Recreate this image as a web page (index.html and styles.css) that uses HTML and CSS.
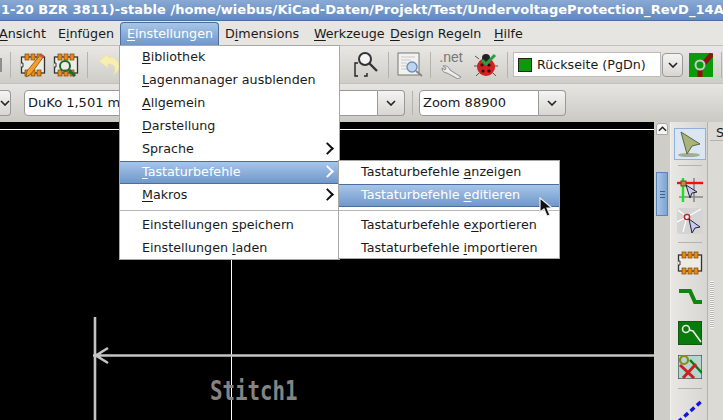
FILE: index.html
```html
<!DOCTYPE html>
<html lang="de">
<head>
<meta charset="UTF-8">
<title>KiCad Pcbnew</title>
<link rel="stylesheet" href="styles.css">
</head>
<body>
<svg class="defs" width="0" height="0">
  <symbol id="footprint" viewBox="0 0 26 26">
    <rect x="1.5" y="5" width="23" height="16" fill="#ecece6" stroke="#333" stroke-width="1.3"/>
    <path d="M1 11h2v4H1" fill="#ecece6" stroke="#333"/>
    <g fill="#ea8a12" stroke="#7a4400" stroke-width=".7">
      <rect x="5" y="2" width="4" height="6"/><rect x="11" y="2" width="4" height="6"/><rect x="17" y="2" width="4" height="6"/>
      <rect x="5" y="18" width="4" height="6"/><rect x="11" y="18" width="4" height="6"/><rect x="17" y="18" width="4" height="6"/>
    </g>
  </symbol>
  <symbol id="arrowdown" viewBox="0 0 10 6">
    <path d="M1 1l4 4 4-4" fill="none" stroke="#222" stroke-width="1.6"/>
  </symbol>
</svg>

<div class="window">
  <div class="titlebar">1-20 BZR 3811)-stable /home/wiebus/KiCad-Daten/Projekt/Test/UndervoltageProtection_RevD_14A</div>

  <div class="menubar">
    <span class="menu-ansicht"><u>A</u>nsicht</span>
    <span class="menu-einfuegen">E<u>i</u>nfügen</span>
    <span class="menu-open"><u>E</u>instellungen</span>
    <span class="menu-dim">D<u>i</u>mensions</span>
    <span class="menu-werk"><u>W</u>erkzeuge</span>
    <span class="menu-design"><u>D</u>esign Regeln</span>
    <span class="menu-hilfe"><u>H</u>ilfe</span>
  </div>

  <div class="toolbar toolbar-top">
    <div class="stub"></div>
    <div class="sep sep-a"></div>
    <svg class="icon icon-edit" width="26" height="26" viewBox="0 0 26 26">
      <use href="#footprint"/>
      <path d="M21 2l3 2-13 18-5 3 1-6z" fill="#f0a030" stroke="#8a5200" stroke-width=".8"/>
      <path d="M21 2l3 2-1.5 2-3-2z" fill="#d84a4a"/>
    </svg>
    <svg class="icon icon-find" width="26" height="26" viewBox="0 0 26 26">
      <use href="#footprint"/>
      <circle cx="12" cy="14" r="5" fill="none" stroke="#1d6a2c" stroke-width="2"/>
      <path d="M16 18l6 6" stroke="#1d6a2c" stroke-width="3"/>
    </svg>
    <div class="sep sep-b"></div>
    <svg class="icon icon-undo" width="22" height="24" viewBox="0 0 22 24">
      <path d="M10 1L1 8l9 7v-4c5 0 7 2 7 6 0 2-1 4-2 5 4-2 6-5 6-9 0-6-5-9-11-9z" fill="#f7eeb0" stroke="#eadf9a" stroke-width=".6"/>
    </svg>
    <div class="hidden-gap"></div>
    <svg class="icon icon-zoomsel" width="26" height="26" viewBox="0 0 26 26">
      <path d="M5 11H2v13h3M11 24h3v-3" fill="none" stroke="#222" stroke-width="1.4"/>
      <circle cx="12" cy="7" r="6" fill="#f4f4f4" stroke="#333" stroke-width="2"/>
      <path d="M16 11l8 8" stroke="#333" stroke-width="2.4"/>
    </svg>
    <div class="sep sep-c"></div>
    <svg class="icon icon-doc" width="26" height="26" viewBox="0 0 26 26">
      <rect x="1" y="1" width="21" height="22" fill="#f2f2f0" stroke="#777"/>
      <path d="M4 5h14M4 8h10M4 11h6M4 14h5M4 17h6" stroke="#c9c9c9"/>
      <circle cx="15" cy="15" r="5" fill="#bcd6f2" stroke="#6f8fb4" stroke-width="1.4"/>
      <path d="M19 19l6 5" stroke="#888" stroke-width="2"/>
    </svg>
    <div class="sep sep-d"></div>
    <div class="net-icon">
      <span class="net-label">.net</span>
      <svg width="24" height="15" viewBox="0 0 24 15">
        <path d="M4 2l3 2-1 2-3-2c0 3 2 5 5 5l11 6 3-2L11 6C10 3 7 1 4 2z" fill="#ececec" stroke="#8c8c8c" stroke-width="1"/>
      </svg>
    </div>
    <svg class="icon icon-bug" width="25" height="24" viewBox="0 0 25 24">
      <path d="M5 6L1 3M4 13H0M5 20l-3 3M19 20l3 3M20 13h4" stroke="#555" stroke-width="1"/>
      <ellipse cx="12" cy="14" rx="9" ry="9" fill="#d32020"/>
      <circle cx="12" cy="5" r="4" fill="#222"/>
      <circle cx="8" cy="12" r="1.6" fill="#300"/><circle cx="15" cy="12" r="1.6" fill="#300"/>
      <circle cx="9" cy="18" r="1.6" fill="#300"/><circle cx="15" cy="18" r="1.6" fill="#300"/>
      <path d="M8 7l4 4 9-9" fill="none" stroke="#25a045" stroke-width="3"/>
    </svg>
    <div class="sep sep-e"></div>
    <div class="layer-box"><span class="layer-swatch"></span>Rückseite (PgDn)</div>
    <div class="layer-btn"><svg width="10" height="6"><use href="#arrowdown"/></svg></div>
    <svg class="icon icon-via" width="24" height="24" viewBox="0 0 24 24">
      <rect width="24" height="24" fill="#0a9a0a"/>
      <path d="M11 24V15L23 1" fill="none" stroke="#8a1414" stroke-width="5"/>
      <circle cx="11" cy="12" r="4.5" fill="#0a9a0a" stroke="#c9c9c9" stroke-width="2"/>
    </svg>
    <div class="sep sep-f"></div>
  </div>

  <div class="toolbar toolbar-bottom">
    <div class="small-btn"><svg width="10" height="6"><use href="#arrowdown"/></svg></div>
    <div class="field field-duko">DuKo 1,501 mm</div>
    <div class="field-btn"><svg width="10" height="6"><use href="#arrowdown"/></svg></div>
    <div class="sep sep-g"></div>
    <div class="field field-zoom">Zoom 88900</div>
    <div class="field-btn"><svg width="10" height="6"><use href="#arrowdown"/></svg></div>
  </div>

  <div class="main">
    <div class="canvas">
      <div class="cross-h"></div>
      <div class="cross-v"></div>
      <svg class="dimension" width="561" height="103" viewBox="0 0 561 103">
        <path d="M2 0V103M0 38.5H561M15 31L3 38.5l12 7.5" fill="none" stroke="#c4c4c4" stroke-width="2.6"/>
      </svg>
      <div class="stitch">Stitch1</div>
    </div>

    <div class="scrollbar">
      <div class="scroll-up"><svg width="9" height="6" viewBox="0 0 10 6"><path d="M1 5l4-4 4 4" fill="none" stroke="#222" stroke-width="1.6"/></svg></div>
      <div class="scroll-thumb"><i></i><i></i><i></i></div>
    </div>

    <div class="vtools">
      <div class="tool-active">
        <svg width="24" height="26" viewBox="0 0 24 26">
          <ellipse cx="11" cy="24" rx="11" ry="2" fill="#8c9468" opacity=".7"/>
          <path d="M3 1l19 12-8 2-5 8z" fill="#a9b37c" stroke="#5c6640" stroke-width="1"/>
        </svg>
      </div>
      <div class="vsep"></div>
      <svg class="vicon v-grid" width="26" height="24" viewBox="0 0 26 24">
        <path d="M17 0v24M2 19h24" stroke="#888" stroke-width="1.6"/>
        <path d="M6 0v24" stroke="#22dd22" stroke-width="2.4"/>
        <path d="M0 5h26" stroke="#f01010" stroke-width="2.4"/>
        <rect x="4" y="3" width="5" height="5" fill="#c88a3a" stroke="#553"/>
        <path d="M9 7l11 7-5 1-2 5z" fill="#c8c8f4" stroke="#223" stroke-width="1"/>
      </svg>
      <svg class="vicon v-rats" width="26" height="26" viewBox="0 0 26 26">
        <rect width="26" height="26" rx="3" fill="#d4d4d4"/>
        <path d="M10 9L1 2M10 9L24 1M10 9L0 14M10 9L6 24" stroke="#fff" stroke-width="1.2"/>
        <circle cx="10" cy="9" r="2.6" fill="none" stroke="#d01818" stroke-width="1.4"/>
        <path d="M12 11l11 8-5 1-3 5z" fill="#c8c8f4" stroke="#223" stroke-width="1"/>
      </svg>
      <div class="vsep vsep-2"></div>
      <svg class="vicon v-foot" width="26" height="26"><use href="#footprint"/></svg>
      <svg class="vicon v-track" width="24" height="16" viewBox="0 0 24 16">
        <path d="M1 2h11l5 11h7" fill="none" stroke="#0a880a" stroke-width="4"/>
      </svg>
      <svg class="vicon v-via2" width="24" height="24" viewBox="0 0 24 24">
        <rect width="24" height="24" fill="#0a7a0a" stroke="#1b3a1b"/>
        <circle cx="8" cy="8" r="3.5" fill="none" stroke="#e8e8e8" stroke-width="1.6"/>
        <path d="M11 9l4 1 8 11" fill="none" stroke="#e8e8e8" stroke-width="1.6"/>
      </svg>
      <svg class="vicon v-keep" width="24" height="24" viewBox="0 0 24 24">
        <rect width="24" height="24" fill="#b4d6d2" stroke="#1b2a1b"/>
        <path d="M12 5l12 13" stroke="#0a7a0a" stroke-width="2.4"/>
        <circle cx="6" cy="5" r="4" fill="none" stroke="#8a8a14" stroke-width="2.2"/>
        <path d="M2 10l14 13M18 9L5 23" stroke="#cc2020" stroke-width="3"/>
      </svg>
      <div class="vsep vsep-3"></div>
      <svg class="vicon v-dash" width="26" height="24" viewBox="0 0 26 24">
        <path d="M1 23L26 1" stroke="#1414e0" stroke-width="3.4" stroke-dasharray="5 3.4"/>
      </svg>
    </div>

    <div class="sidepanel">
      <div class="side-head">S</div>
      <div class="side-grip"></div>
    </div>
  </div>

  <!-- open menus -->
  <div class="popup popup-main">
    <div class="item"><u>B</u>ibliothek</div>
    <div class="item"><u>L</u>agenmanager ausblenden</div>
    <div class="item"><u>A</u>llgemein</div>
    <div class="item"><u>D</u>arstellung</div>
    <div class="item">Sprache<b class="more"></b></div>
    <div class="item active"><u>T</u>astaturbefehle<b class="more"></b></div>
    <div class="item"><u>M</u>akros<b class="more"></b></div>
    <div class="popup-sep"></div>
    <div class="item">Einstellungen <u>s</u>peichern</div>
    <div class="item">Einstellungen <u>l</u>aden</div>
  </div>
  <div class="popup popup-sub">
    <div class="item">Tastaturbefehle <u>a</u>nzeigen</div>
    <div class="item active">Tastaturbefehle <u>e</u>ditieren</div>
    <div class="popup-sep"></div>
    <div class="item">Tastaturbefehle e<u>x</u>portieren</div>
    <div class="item">Tastaturbefehle <u>i</u>mportieren</div>
  </div>

  <svg class="cursor" width="16" height="21" viewBox="0 0 16 21">
    <path d="M1 1v14l4-3 3 7 3-1-3-7h5z" fill="#111" stroke="#eee" stroke-width="1.2"/>
  </svg>
</div>
</body>
</html>
```

FILE: styles.css
```css
html, body { margin:0; padding:0; background:#000; }
.defs { position:absolute; }
.window { width:723px; height:420px; overflow:hidden; position:relative; display:flex; flex-direction:column; font-family:"DejaVu Sans",sans-serif; font-size:12.7px; color:#1a1a1a; background:#dcdad5; }
u { text-decoration-thickness:1px; text-underline-offset:2px; }

.titlebar { height:21px; flex:none; line-height:20px; padding-left:1px; box-sizing:border-box; background:linear-gradient(#8aa9d4,#6089c0); color:#fff; font-weight:bold; font-size:13px; white-space:nowrap; overflow:hidden; letter-spacing:.05px; border-bottom:1px solid #4a6f9f; }

.menubar { height:24px; flex:none; display:flex; align-items:center; background:#e6e5e1; box-sizing:border-box; white-space:nowrap; }
.menu-ansicht { margin-left:-1px; width:46px; }
.menu-einfuegen { margin-left:13px; width:56px; }
.menu-open { margin-left:6px; height:23px; margin-top:1px; line-height:22px; padding:0 6px; box-sizing:border-box; width:99px; border:1px solid #4a6f9f; border-bottom:0; border-radius:4px 4px 0 0; background:linear-gradient(#a7c5e9,#6f98ca); color:#fff; }
.menu-dim { margin-left:6px; width:75px; }
.menu-werk { margin-left:14px; width:62px; }
.menu-design { margin-left:14px; width:90px; }
.menu-hilfe { margin-left:14px; }

.toolbar { flex:none; display:flex; align-items:center; border-top:1px solid #c2c0ba; box-sizing:border-box; background:linear-gradient(#e8e7e3,#cfcdc8); }
.toolbar-top { height:38px; }
.toolbar-bottom { height:39px; background:linear-gradient(#e6e5e1,#cbc9c4); }
.sep { width:1px; height:26px; background:#b5b3ad; flex:none; }
.icon { flex:none; }

.stub { width:2px; height:14px; background:#8e8e8a; }
.sep-a { margin-left:8px; }
.icon-edit { margin-left:9px; }
.icon-find { margin-left:7px; }
.sep-b { margin-left:8px; }
.icon-undo { margin-left:10px; }
.hidden-gap { width:233px; flex:none; }
.sep-c { margin-left:9px; }
.icon-doc { margin-left:8px; }
.sep-d { margin-left:7px; }
.net-icon { width:24px; margin-left:8px; display:flex; flex-direction:column; align-items:center; flex:none; }
.net-label { font-size:14px; line-height:13px; color:#777; font-family:"Liberation Sans",sans-serif; }
.icon-bug { margin-left:11px; }
.sep-e { margin-left:8px; }
.layer-box { margin-left:5px; width:148px; height:25px; box-sizing:border-box; display:flex; align-items:center; background:#fff; border:1px solid #bbb; padding-left:4px; flex:none; }
.layer-swatch { width:14px; height:14px; box-sizing:border-box; background:#0a9a0a; border:1px solid #222; margin-right:5px; }
.layer-btn { margin-left:1px; width:21px; height:24px; box-sizing:border-box; border:1px solid #999; border-radius:4px; background:linear-gradient(#f4f4f2,#d8d6d2); display:flex; align-items:center; justify-content:center; flex:none; }
.icon-via { margin-left:6px; }
.sep-f { margin-left:8px; }

.small-btn { width:11px; height:26px; box-sizing:border-box; border:1px solid #999; border-left:0; border-radius:0 4px 4px 0; background:linear-gradient(#f4f4f2,#d8d6d2); display:flex; align-items:center; justify-content:flex-end; overflow:hidden; flex:none; }
.field { height:26px; line-height:24px; box-sizing:border-box; background:#fff; border:1px solid #999; border-radius:4px 0 0 4px; padding-left:3px; white-space:nowrap; overflow:hidden; flex:none; font-size:13px; }
.field-duko { margin-left:13px; width:354px; }
.field-zoom { margin-left:6px; width:120px; }
.field-btn { width:27px; height:26px; box-sizing:border-box; border:1px solid #999; border-left:0; border-radius:0 4px 4px 0; background:linear-gradient(#f4f4f2,#d8d6d2); display:flex; align-items:center; justify-content:center; flex:none; }
.sep-g { margin-left:7px; height:24px; }

.main { flex:1; display:flex; min-height:0; }
.canvas { width:654px; flex:none; background:#000; position:relative; overflow:hidden; }
.cross-h { position:absolute; left:0; right:0; top:7px; height:1px; background:#fff; }
.cross-v { position:absolute; left:231px; top:0; bottom:0; width:1px; background:#fff; }
.dimension { position:absolute; left:93px; top:195px; }
.stitch { position:absolute; left:210px; top:253px; font-family:"DejaVu Sans Mono",monospace; font-weight:bold; font-size:27px; line-height:32px; color:#848484; transform:scaleX(.77); transform-origin:left; }

.scrollbar { width:17px; flex:none; box-sizing:border-box; background:#cfcdc8; padding:1px 2px 0; border-right:1px solid #f0efec; }
.scroll-up { height:12px; border:1px solid #aaa; background:#f4f4f2; border-radius:3px 3px 0 0; display:flex; align-items:center; justify-content:center; box-sizing:border-box; }
.scroll-thumb { margin-top:37px; height:44px; box-sizing:border-box; background:linear-gradient(90deg,#a7c5e9,#7ea4d2); border:1px solid #5e83b2; display:flex; flex-direction:column; align-items:center; justify-content:center; gap:2px; }
.scroll-thumb i { width:5px; height:1px; background:#3c5f8c; }

.vtools { width:37px; flex:none; box-sizing:border-box; padding:6px 0 0 1px; display:flex; flex-direction:column; align-items:center; background:linear-gradient(90deg,#e8e7e3,#d8d6d2); border-right:1px solid #b5b3ad; }
.tool-active { width:32px; height:32px; box-sizing:border-box; border:1px solid #8fb0d8; background:#dbe6f2; display:flex; align-items:center; justify-content:center; flex:none; }
.vsep { width:24px; height:1px; background:#b5b3ad; flex:none; margin-top:5px; }
.vsep-2 { margin-top:8px; }
.vsep-3 { margin-top:9px; }
.vicon { flex:none; }
.v-grid { margin-top:12px; }
.v-rats { margin-top:6px; }
.v-foot { margin-top:7px; }
.v-track { margin-top:13px; }
.v-via2 { margin-top:16px; }
.v-keep { margin-top:10px; }
.v-dash { margin-top:10px; }

.sidepanel { flex:1; background:#dcdad5; padding:3px 0 0 2px; }
.side-head { height:15px; line-height:15px; padding-left:6px; border-bottom:1px solid #b5b3ad; }
.side-grip { margin-top:140px; width:4px; height:47px; background:repeating-linear-gradient(#fff 0 1px,#aaa 1px 2px); opacity:.8; }

.popup { position:absolute; background:#fff; border:1px solid #a8a8a6; box-sizing:border-box; white-space:nowrap; }
.popup-main { left:119px; top:45px; width:221px; height:215px; }
.popup-sub { left:338px; top:160px; width:222px; height:99px; }
.item { height:23px; line-height:22px; padding-left:22px; position:relative; box-sizing:border-box; }
.popup-sep { height:7px; position:relative; }
.popup-sep::after { content:""; position:absolute; left:0; right:0; top:3px; height:1px; background:#b8b8b6; }
.item.active { background:linear-gradient(#a7c5e9,#6f98ca); color:#fff; border-top:1px solid #4a6f9f; border-bottom:1px solid #4a6f9f; line-height:20px; }
.more { position:absolute; right:7px; top:6px; width:7px; height:7px; border-top:2px solid #111; border-right:2px solid #111; transform:rotate(45deg); }
.item.active .more { border-color:#fff; top:5px; }
.cursor { position:absolute; left:539px; top:197px; }
```
